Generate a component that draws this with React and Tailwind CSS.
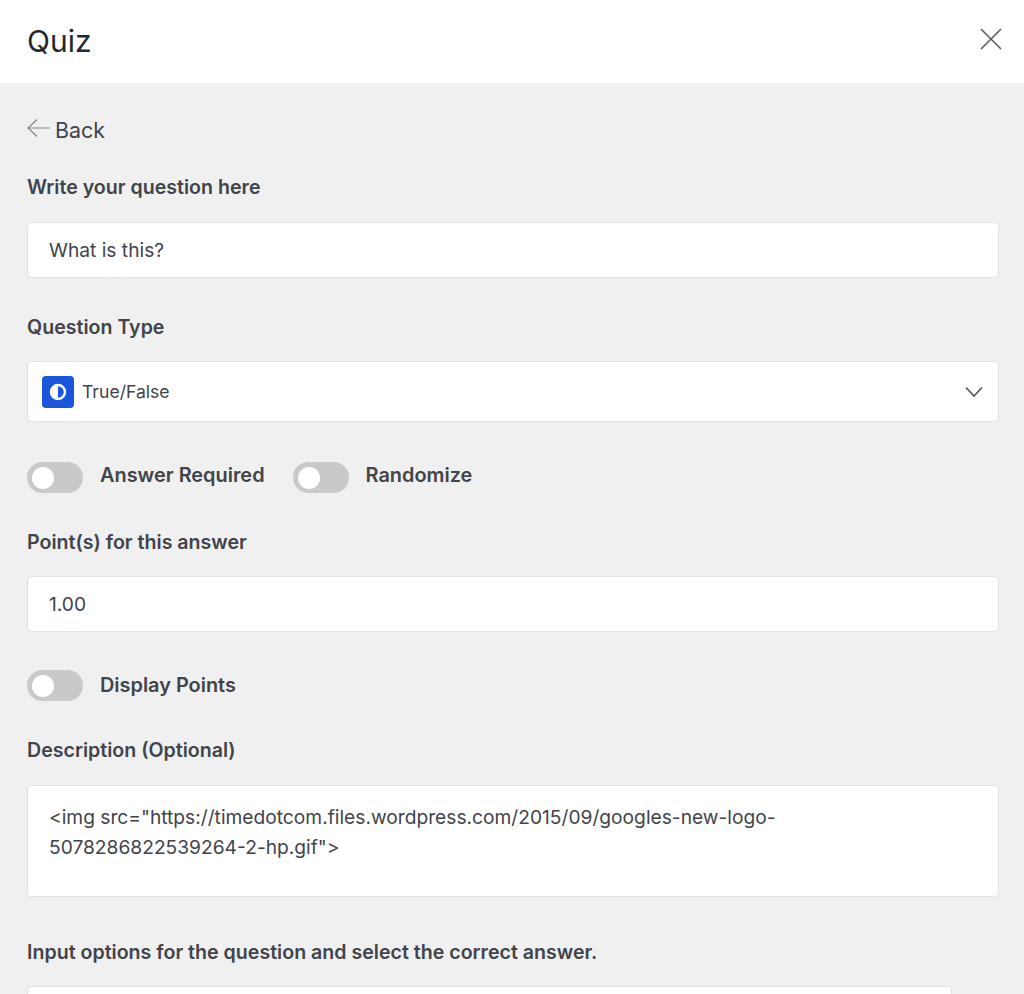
import React from 'react';

function Toggle({ label, textClass }) {
  return (
    <div className="flex items-center">
      <div className="flex h-[31px] w-[56px] items-center rounded-full bg-[#c9c9c9] pl-[5px]">
        <div className="h-[22px] w-[22px] rounded-full bg-white"></div>
      </div>
      <span className={`ml-[17px] text-[19.9px] leading-[27px] font-semibold text-[#41444a] ${textClass}`}>{label}</span>
    </div>
  );
}

function Label({ children, className }) {
  return <p className={`text-[19.6px] leading-[24px] font-semibold text-[#41444a] ${className}`}>{children}</p>;
}

export default function App() {
  return (
    <div className="h-[994px] w-[1024px] overflow-hidden bg-[#f0f0f0] font-['Inter',sans-serif]">
      <header className="flex h-[83px] items-center justify-between bg-white pl-[27px] pr-[21px]">
        <h1 className="mb-[2px] text-[30px] leading-[40px] font-normal text-[#23282d]">Quiz</h1>
        <svg width="24" height="24" viewBox="0 0 24 24" fill="none" stroke="#5b5d62" strokeWidth="1.6" className="mb-[6px]">
          <path d="M2 2 L22 22 M22 2 L2 22" />
        </svg>
      </header>

      <main className="pl-[27px] pr-[25px]">
        <div className="mt-[34px] flex h-[26px] items-center">
          <svg width="24" height="20" viewBox="0 0 24 20" fill="none" stroke="#85878b" strokeWidth="1.2" className="mb-[4px] mr-[4px]">
            <path d="M23 10 H1 M10 1.5 L1 10 L10 18.5" />
          </svg>
          <span className="text-[21.4px] leading-[26px] text-[#41444a]">Back</span>
        </div>

        <Label className="mt-[32px]">Write your question here</Label>
        <div className="mt-[23px] flex h-[56px] items-center rounded-[4px] border border-[#e2e2e2] bg-white pl-[21px] text-[19.2px] text-[#41444a]">
          What is this?
        </div>

        <Label className="mt-[37px]">Question Type</Label>
        <div className="mt-[22px] flex h-[61px] items-center justify-between rounded-[4px] border border-[#e2e2e2] bg-white pl-[14px] pr-[15px]">
          <div className="flex items-center">
            <div className="flex h-[32px] w-[32px] items-center justify-center rounded-[4px] bg-[#1a56db]">
              <svg width="18" height="18" viewBox="0 0 18 18">
                <circle cx="9" cy="9" r="7" fill="none" stroke="white" strokeWidth="2.4" />
                <path d="M9 2 A7 7 0 0 0 9 16 Z" fill="white" />
              </svg>
            </div>
            <span className="ml-[8px] mt-[2px] text-[17.6px] text-[#41444a]">True/False</span>
          </div>
          <svg width="18" height="12" viewBox="0 0 18 12" fill="none" stroke="#55575c" strokeWidth="1.7">
            <path d="M1 1.5 L9 10 L17 1.5" />
          </svg>
        </div>

        <div className="mt-[40px] flex gap-[28px]">
          <Toggle label="Answer Required" textClass="mb-[4px]" />
          <Toggle label="Randomize" textClass="mb-[4px]" />
        </div>

        <Label className="mt-[37px]">Point(s) for this answer</Label>
        <div className="mt-[22px] flex h-[56px] items-center rounded-[4px] border border-[#e2e2e2] bg-white pl-[21px] text-[19.2px] text-[#41444a]">
          1.00
        </div>

        <div className="mt-[38px]">
          <Toggle label="Display Points" />
        </div>

        <Label className="mt-[37px]">Description (Optional)</Label>
        <div className="mt-[23px] h-[112px] rounded-[4px] border border-[#e2e2e2] bg-white pl-[21px] pr-[22px] pt-[16px] text-[19.2px] leading-[30px] text-[#41444a]">
          &lt;img src="https://timedotcom.files.wordpress.com/2015/09/googles-new-logo-
          <br />
          5078286822539264-2-hp.gif"&gt;
        </div>

        <Label className="mt-[43px]">Input options for the question and select the correct answer.</Label>
        <div className="mt-[22px] h-[60px] w-[925px] rounded-[4px] border border-[#e2e2e2] bg-white"></div>
      </main>
    </div>
  );
}
